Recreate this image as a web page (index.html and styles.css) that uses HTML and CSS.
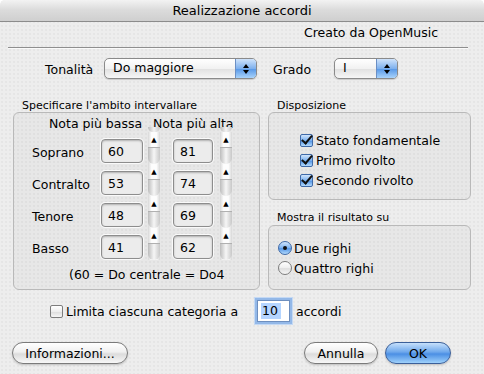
FILE: index.html
```html
<!DOCTYPE html>
<html lang="it">
<head>
  <meta charset="UTF-8" />
  <title>Realizzazione accordi</title>
  <link rel="stylesheet" href="styles.css">
</head>
<body>
  <div class="window">
    <!-- Barra del titolo -->
    <div class="titlebar">Realizzazione accordi</div>

    <div class="content">
      <div class="credit">Creato da OpenMusic</div>
      <div class="separator"></div>

      <!-- Tonalità e grado -->
      <div class="key-row">
        <span class="key-label">Tonalità</span>
        <div class="popup popup-key"><span>Do maggiore</span><i class="popup-arrows"></i></div>
        <span class="degree-label">Grado</span>
        <div class="popup popup-degree"><span>I</span><i class="popup-arrows"></i></div>
      </div>

      <div class="groups">
        <!-- Ambito intervallare -->
        <div class="group group-range">
          <div class="group-title">Specificare l'ambito intervallare</div>
          <div class="group-box range-grid">
            <div class="col-head head-low">Nota più bassa</div>
            <div class="col-head head-high">Nota più alta</div>

            <div class="voice">Soprano</div>
            <div class="field low">60</div>
            <div class="field high">81</div>
            <div class="voice">Contralto</div>
            <div class="field low">53</div>
            <div class="field high">74</div>
            <div class="voice">Tenore</div>
            <div class="field low">48</div>
            <div class="field high">69</div>
            <div class="voice">Basso</div>
            <div class="field low">41</div>
            <div class="field high">62</div>

            <div class="strip strip-low">
              <div class="strip-cap"></div>
              <div class="seg"><b>▲</b></div>
              <div class="seg"><b>▲</b></div>
              <div class="seg"><b>▲</b></div>
              <div class="seg"><b>▲</b></div>
            </div>
            <div class="strip strip-high">
              <div class="strip-cap"></div>
              <div class="seg"><b>▲</b></div>
              <div class="seg"><b>▲</b></div>
              <div class="seg"><b>▲</b></div>
              <div class="seg"><b>▲</b></div>
            </div>

            <div class="footnote">(60 = Do centrale = Do4</div>
          </div>
        </div>

        <div class="right-col">
          <!-- Disposizione -->
          <div class="group">
            <div class="group-title">Disposizione</div>
            <div class="group-box checks">
              <label class="check-item"><i class="checkbox on"></i>Stato fondamentale</label>
              <label class="check-item"><i class="checkbox on"></i>Primo rivolto</label>
              <label class="check-item"><i class="checkbox on"></i>Secondo rivolto</label>
            </div>
          </div>

          <!-- Risultato -->
          <div class="group">
            <div class="group-title title-result">Mostra il risultato su</div>
            <div class="group-box radios">
              <label class="radio-item"><i class="radio on"></i>Due righi</label>
              <label class="radio-item"><i class="radio"></i>Quattro righi</label>
            </div>
          </div>
        </div>
      </div>

      <div class="limit-row">
        <label class="check-item"><i class="checkbox"></i>Limita ciascuna categoria a</label>
        <div class="field-focus"><span class="sel">10</span></div>
        <span>accordi</span>
      </div>

      <div class="buttons">
        <button class="btn btn-info">Informazioni...</button>
        <div class="spacer"></div>
        <button class="btn btn-cancel">Annulla</button>
        <button class="btn btn-ok">OK</button>
      </div>
    </div>
  </div>
</body>
</html>
```

FILE: styles.css
```css
body {
  margin: 0;
  font-family: "DejaVu Sans", Verdana, sans-serif;
  font-size: 12.5px;
  color: #000;
  background: #fff;
}

.window {
  width: 484px;
  height: 374px;
  overflow: hidden;
  background-color: #ededed;
  background-image: radial-gradient(circle, #dcdcdc 0.6px, transparent 0.8px);
  background-size: 4px 4px;
  border-radius: 5px 5px 0 0;
}

/* Barra del titolo */
.titlebar {
  height: 22px;
  line-height: 21px;
  text-align: center;
  font-size: 13px;
  background: linear-gradient(#f3f3f3, #dcdcdc 45%, #cfcfcf);
  border-bottom: 1px solid #8c8c8c;
  box-sizing: border-box;
  border-radius: 5px 5px 0 0;
}

.credit {
  text-align: right;
  padding: 3px 46px 0 0;
  height: 16px;
}

.separator {
  margin: 6px 16px 0 8px;
  border-top: 1px solid #8e8e8e;
  border-bottom: 1px solid #fafafa;
}

/* Riga tonalità */
.key-row {
  display: flex;
  align-items: center;
  height: 22px;
  margin-top: 8px;
  padding-left: 45px;
}

.key-label {
  width: 59px;
  padding-top: 3px;
}

.degree-label {
  margin-left: 16px;
  width: 61px;
  padding-top: 3px;
}

.popup {
  height: 21px;
  box-sizing: border-box;
  border: 1px solid #8a8a8a;
  border-radius: 5px;
  background: linear-gradient(#ffffff, #f2f2f2 50%, #e2e2e2 55%, #f6f6f6);
  display: flex;
  align-items: center;
  overflow: hidden;
  box-shadow: 0 1px 1px rgba(0, 0, 0, 0.15);
}

.popup span {
  flex: 1;
  padding-left: 8px;
  padding-bottom: 2px;
}

.popup-key {
  width: 153px;
}

.popup-degree {
  width: 64px;
}

.popup-arrows {
  width: 20px;
  height: 100%;
  border-left: 1px solid #6b8fc4;
  background: linear-gradient(#cfe3fb, #7fb1ee 50%, #5c9be8 55%, #a9d3fb);
  position: relative;
}

.popup-arrows::before,
.popup-arrows::after {
  content: "";
  position: absolute;
  left: 7px;
  border-left: 3px solid transparent;
  border-right: 3px solid transparent;
}

.popup-arrows::before {
  top: 5px;
  border-bottom: 4px solid #000;
}

.popup-arrows::after {
  top: 11px;
  border-top: 4px solid #000;
}

/* Gruppi */
.groups {
  display: flex;
  margin-top: 20px;
  padding-left: 13px;
  gap: 8px;
}

.group-title {
  font-size: 11px;
  height: 13px;
  padding-left: 9px;
}

.group-box {
  border: 1px solid #b9b9b9;
  border-radius: 6px;
  background: rgba(0, 0, 0, 0.025);
  box-sizing: border-box;
}

.group-range .group-box {
  width: 247px;
  height: 178px;
}

.range-grid {
  display: grid;
  grid-template-columns: 18px 69px 42px 5px 12px 13px 40px 7px 12px;
  grid-template-rows: 17px repeat(4, 32px) auto;
  padding-top: 3px;
}

.col-head {
  grid-row: 1;
  white-space: nowrap;
}

.head-low {
  grid-column: 2 / 4;
  padding-left: 17px;
}

.head-high {
  grid-column: 7 / 10;
  margin-left: -20px;
}

.voice {
  grid-column: 2;
  padding-top: 12px;
}

.field {
  margin-top: 6px;
  height: 24px;
  box-sizing: border-box;
  border: 1px solid #8d8d8d;
  border-radius: 4px;
  background: #ececec;
  box-shadow: inset 0 1px 2px rgba(0, 0, 0, 0.25), 0 0 0 1px #fafafa;
  padding: 4px 0 0 6px;
}

.field.low {
  grid-column: 3;
}

.field.high {
  grid-column: 7;
}

/* Barre di scorrimento tagliate */
.strip {
  grid-row: 1 / 6;
  margin-top: 11px;
  display: flex;
  flex-direction: column;
  z-index: -0;
}

.strip-low {
  grid-column: 5;
}

.strip-high {
  grid-column: 9;
}

.strip-cap {
  height: 5px;
  border-radius: 0 0 6px 6px;
  background: linear-gradient(90deg, #b9b9b9, #f4f4f4 50%, #c6c6c6);
}

.seg {
  height: 32px;
  display: flex;
  flex-direction: column;
  background: linear-gradient(90deg, #d8d8d8, #fdfdfd 30%, #fdfdfd 70%, #d8d8d8);
}

.seg b {
  height: 16px;
  font-size: 7px;
  text-align: center;
  line-height: 10px;
  padding-top: 3px;
  box-sizing: border-box;
  border-bottom: 1px solid #b0b0b0;
  font-weight: normal;
  font-family: "DejaVu Sans", sans-serif;
}

.seg::after {
  content: "";
  flex: 1;
  border-radius: 0 0 6px 6px;
  background: linear-gradient(90deg, #bcbcbc, #f6f6f6 50%, #c8c8c8);
}

.footnote {
  grid-column: 1 / -1;
  grid-row: 6;
  padding: 6px 0 0 55px;
}

.right-col {
  display: flex;
  flex-direction: column;
}

.right-col .group-box {
  width: 203px;
}

.checks {
  height: 88px;
  padding: 19px 0 0 31px;
  display: flex;
  flex-direction: column;
  gap: 4px;
}

.title-result {
  margin-top: 11px;
  height: 14px;
}

.radios {
  height: 65px;
  padding: 14px 0 0 9px;
  display: flex;
  flex-direction: column;
  gap: 4px;
}

.check-item,
.radio-item {
  display: flex;
  align-items: center;
  height: 16px;
}

/* Checkbox e radio stile Aqua */
.checkbox {
  width: 13px;
  height: 13px;
  box-sizing: border-box;
  border: 1px solid #7d7d7d;
  border-radius: 2px;
  margin-right: 3px;
  background: linear-gradient(#ffffff, #eeeeee 50%, #dedede 55%, #f6f6f6);
  position: relative;
}

.checkbox.on {
  border-color: #3f6aa8;
  background: linear-gradient(#d2e6fc, #7ab0ef 50%, #5596e6 55%, #b3dafd);
}

.checkbox.on::after {
  content: "";
  position: absolute;
  left: 3px;
  top: -2px;
  width: 4px;
  height: 9px;
  border-right: 2px solid #111;
  border-bottom: 2px solid #111;
  transform: rotate(40deg);
}

.radio {
  width: 14px;
  height: 14px;
  box-sizing: border-box;
  border: 1px solid #7d7d7d;
  border-radius: 50%;
  margin-right: 2px;
  background: linear-gradient(#ffffff, #eeeeee 50%, #dedede 55%, #f6f6f6);
  position: relative;
}

.radio.on {
  border-color: #3f6aa8;
  background: linear-gradient(#d2e6fc, #7ab0ef 50%, #5596e6 55%, #b3dafd);
}

.radio.on::after {
  content: "";
  position: absolute;
  left: 4px;
  top: 4px;
  width: 4px;
  height: 4px;
  border-radius: 50%;
  background: #111;
}

/* Limite accordi */
.limit-row {
  display: flex;
  align-items: center;
  margin-top: 10px;
  padding-left: 50px;
  height: 22px;
}

.limit-row .check-item {
  width: 207px;
}

.field-focus {
  width: 33px;
  height: 22px;
  box-sizing: border-box;
  border: 1px solid #6e8fbf;
  box-shadow: 0 0 0 2px #93b8e8, 0 0 0 3px #c4d9f4;
  background: #fff;
  padding: 2px 0 0 3px;
  margin-right: 6px;
}

.sel {
  background: #b5d5ff;
  padding: 0 3px 1px 1px;
}

/* Pulsanti */
.buttons {
  display: flex;
  align-items: center;
  margin-top: 20px;
  padding: 0 33px 0 12px;
  gap: 7px;
}

.spacer {
  flex: 1;
}

.btn {
  height: 22px;
  font-family: inherit;
  font-size: 12.5px;
  border: 1px solid #7a7a7a;
  border-radius: 11px;
  background: linear-gradient(#ffffff, #f0f0f0 45%, #dcdcdc 55%, #f7f7f7);
  box-shadow: 0 1px 2px rgba(0, 0, 0, 0.2);
  padding: 0;
  color: #000;
}

.btn-info {
  width: 116px;
}

.btn-cancel {
  width: 74px;
}

.btn-ok {
  width: 66px;
  border-color: #3b5f99;
  background: linear-gradient(#c6e0fb, #6ea8ec 45%, #4b8fe4 55%, #9fd1fb);
}
```
